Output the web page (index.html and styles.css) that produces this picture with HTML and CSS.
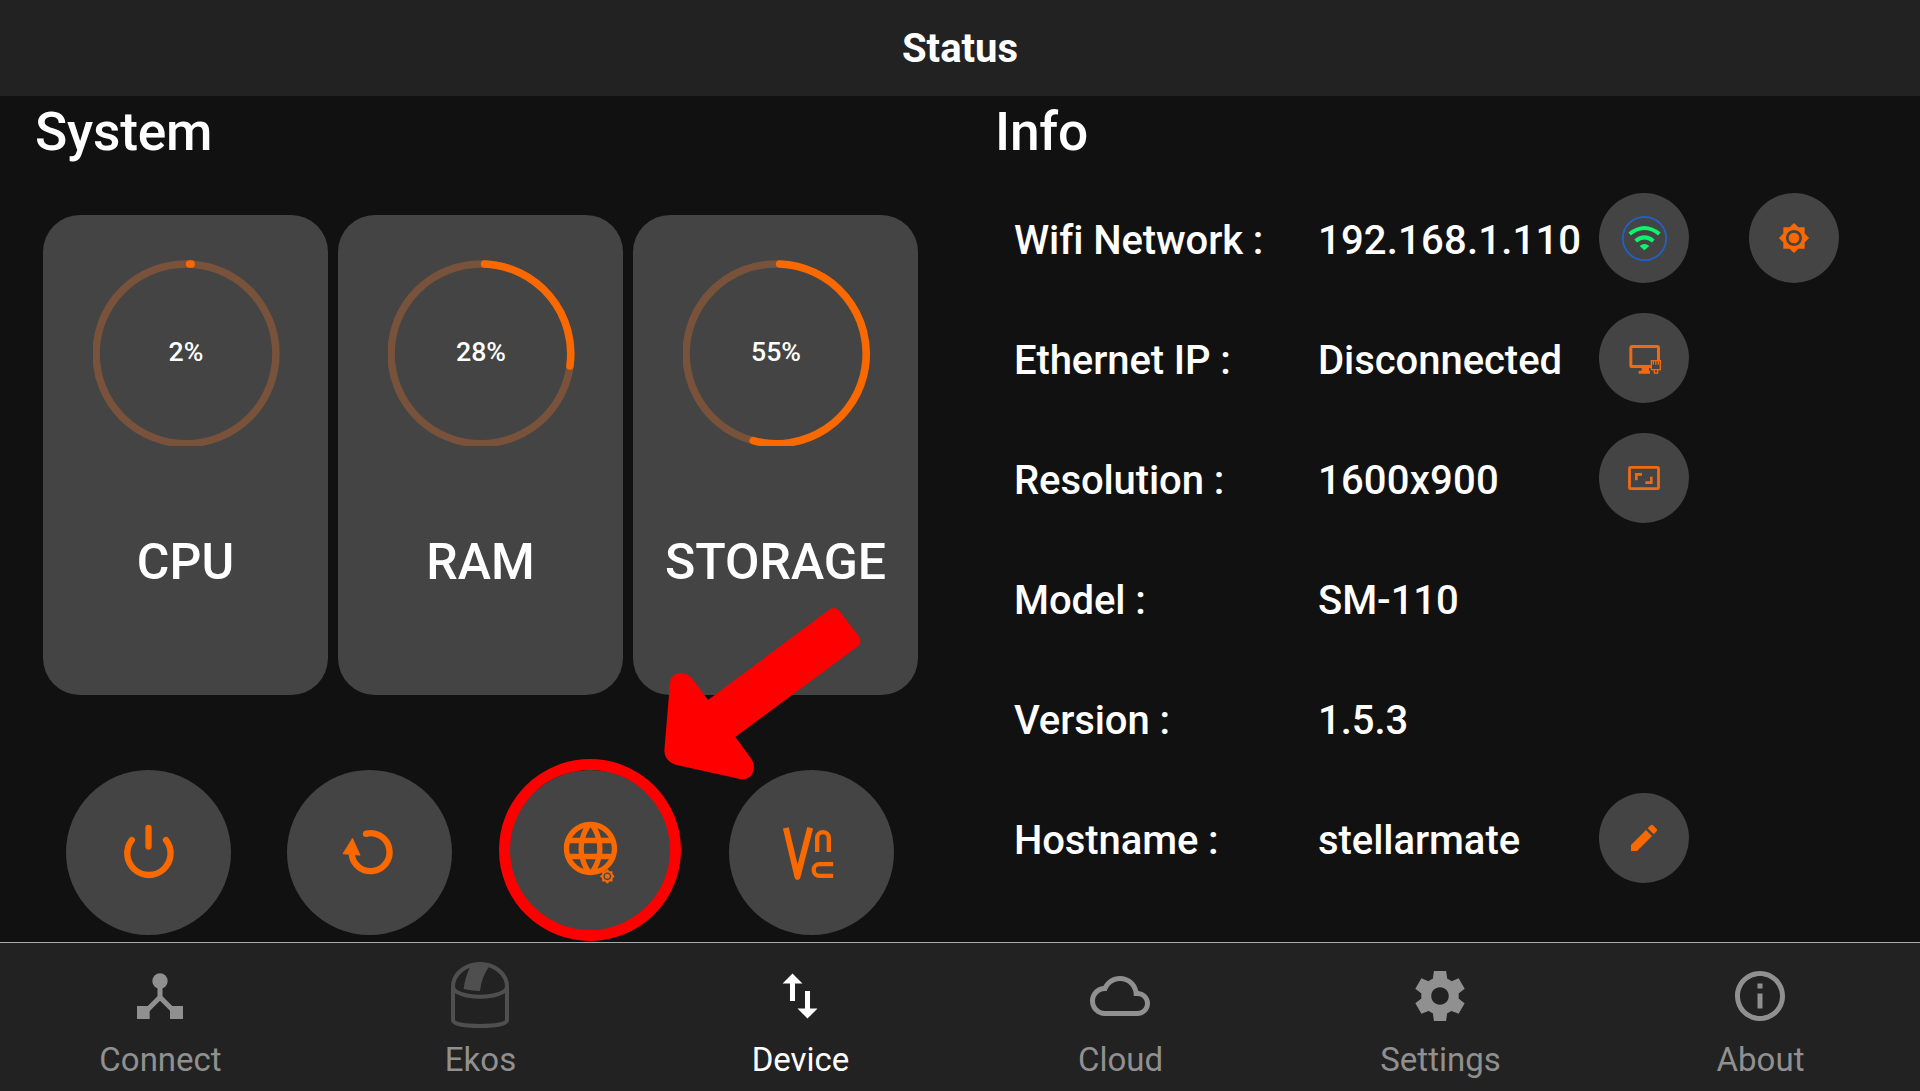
FILE: index.html
```html
<!DOCTYPE html>
<html lang="en">
<head>
<meta charset="utf-8">
<title>Status</title>
<link rel="stylesheet" href="styles.css">
</head>
<body>
<header class="topbar"><h1 class="topbar-title">Status</h1></header>

<main class="content">
  <section class="panel system">
    <h2 class="panel-title">System</h2>
    <div class="cards">
      <div class="card">
        <div class="gauge">
          <svg class="gauge-ring" viewBox="0 0 188 186"><circle class="track" cx="93" cy="93.8" r="89.9"/><path class="bar" d="M96.600 4A89.900 89.900 0 0 1 98.100 4.100"/></svg>
          <span class="gauge-value">2%</span>
        </div>
        <div class="card-label">CPU</div>
      </div>
      <div class="card">
        <div class="gauge">
          <svg class="gauge-ring" viewBox="0 0 188 186"><circle class="track" cx="93" cy="93.8" r="89.9"/><path class="bar" d="M96.600 4A89.900 89.900 0 0 1 181.900 106"/></svg>
          <span class="gauge-value">28%</span>
        </div>
        <div class="card-label">RAM</div>
      </div>
      <div class="card">
        <div class="gauge">
          <svg class="gauge-ring" viewBox="0 0 188 186"><circle class="track" cx="93" cy="93.8" r="89.9"/><path class="bar" d="M96.600 4A89.900 89.900 0 1 1 70.200 180.700"/></svg>
          <span class="gauge-value">55%</span>
        </div>
        <div class="card-label">STORAGE</div>
      </div>
    </div>
    <div class="actions">
      <div class="action">
        <svg class="icon" viewBox="-91.5 -91.5 183 183"><g class="line" stroke-width="19" stroke-linecap="round"><path d="M-50-37.5A65 65 0 1 0 52.500-37.500"/><path d="M0-74V-18"/></g></svg>
      </div>
      <div class="action">
        <svg class="icon" viewBox="-91.5 -91.5 183 183"><path class="line" stroke-width="19" d="M-10-56.500A57 57 0 1 1-53.500 5"/><circle cx="-10.500" cy="-56" r="9.500"/><path d="M-51-43L-28 8L-80 4Z" stroke="currentColor" stroke-width="2" stroke-linejoin="round"/></svg>
      </div>
      <div class="action action-marked">
        <svg class="icon" viewBox="-91.5 -91.5 183 183">
          <path transform="translate(0 -12) scale(8) translate(-12 -12)" d="M11.990 2C6.470 2 2 6.480 2 12s4.470 10 9.990 10C17.520 22 22 17.520 22 12S17.520 2 11.990 2zm6.930 6h-2.950c-.32-1.250-.78-2.450-1.380-3.560 1.840.63 3.370 1.910 4.330 3.560zM12 4.040c.83 1.200 1.480 2.530 1.910 3.960h-3.820c.43-1.430 1.080-2.760 1.910-3.960zM4.260 14C4.100 13.360 4 12.690 4 12s.1-1.360.26-2h3.380c-.08.66-.14 1.320-.14 2 0 .68.06 1.340.14 2H4.260zm.82 2h2.950c.32 1.250.78 2.450 1.380 3.560-1.840-.63-3.370-1.900-4.330-3.560zm2.950-8H5.080c.96-1.660 2.490-2.930 4.330-3.560C8.810 5.550 8.350 6.750 8.030 8zM12 19.960c-.83-1.200-1.480-2.530-1.910-3.960h3.820c-.43 1.430-1.080 2.760-1.910 3.960zM14.340 14H9.660c-.09-.66-.16-1.320-.16-2 0-.68.07-1.350.16-2h4.680c.09.65.16 1.320.16 2 0 .68-.07 1.340-.16 2zm.25 5.560c.6-1.110 1.060-2.310 1.380-3.560h2.950c-.96 1.650-2.490 2.930-4.330 3.560zM16.360 14c.08-.66.14-1.320.14-2 0-.68-.06-1.340-.14-2h3.380c.16.64.26 1.310.26 2s-.1 1.360-.26 2h-3.380z"/>
          <path class="soft" transform="translate(50.500 71.500) scale(1.950) translate(-12 -12)" fill-rule="evenodd" d="M20 15.310L23.310 12 20 8.690V4h-4.690L12 .69 8.690 4H4v4.690L.69 12 4 15.310V20h4.690L12 23.310 15.310 20H20v-4.690zM12 18c-3.310 0-6-2.690-6-6s2.690-6 6-6 6 2.690 6 6-2.690 6-6 6z"/>
          <circle class="soft" cx="50.500" cy="71.500" r="7.500"/>
        </svg>
      </div>
      <div class="action">
        <svg class="icon" viewBox="-91.5 -91.5 183 183"><g class="line"><path stroke-width="18" stroke-linejoin="round" d="M-77-74L-42 73L-4-74"/><path stroke-width="13" d="M17-1.500V-43.500A17.500 17.500 0 0 1 52-43.500V-1.500M65 35H24A17.500 17.500 0 0 0 24 70H65"/></g></svg>
      </div>
      <svg class="pointer" viewBox="552 54 588 513"><path d="M684 330L1050 58Q1065 49 1078 62L1137 140Q1147 155 1135 168L766 441L812 504Q824 520 821 540Q814 571 780 567L590 525Q554 514 553 482L570 278Q574 250 603 249Q625 250 638 268Z"/></svg>
    </div>
  </section>

  <section class="panel info">
    <h2 class="panel-title">Info</h2>
    <div class="rows">
      <div class="row">
        <span class="label">Wifi Network :</span><span class="value numeric">192.168.1.110</span>
        <div class="tool">
          <svg class="icon" viewBox="-90 -90 180 180"><circle class="wifi-ring" cx="1.500" cy="1.500" r="65"/><g class="wifi-waves"><path d="M-43-12Q1-48 46-12M-25 9Q1-13 28 9"/></g><path class="wifi-dot" d="M-13 24Q1 12 16 24L1 37Z"/></svg>
        </div>
        <div class="tool tool-far">
          <svg class="icon" viewBox="-90 -90 180 180"><path transform="scale(4) translate(-12 -12)" d="M20 15.310L23.310 12 20 8.690V4h-4.690L12 .69 8.690 4H4v4.690L.69 12 4 15.310V20h4.690L12 23.310 15.310 20H20v-4.690zM12 18c-3.310 0-6-2.690-6-6s2.690-6 6-6 6 2.690 6 6-2.690 6-6 6z"/><circle r="16"/></svg>
        </div>
      </div>
      <div class="row">
        <span class="label">Ethernet IP :</span><span class="value">Disconnected</span>
        <div class="tool">
          <svg class="icon soft" viewBox="-90 -90 180 180"><rect class="line" x="-39.500" y="-34.500" width="83" height="60" rx="4" stroke-width="9"/><path d="M-7 28H15V38H18V47H-16V38H-7Z"/><rect class="plug" x="22" y="8" width="27" height="27"/><path class="line" stroke-width="4" d="M28 8V20M35.500 8V20M43 8V20M31 35V45H41V35"/></svg>
        </div>
      </div>
      <div class="row">
        <span class="label">Resolution :</span><span class="value numeric">1600x900</span>
        <div class="tool">
          <svg class="icon soft" viewBox="-90 -90 180 180"><g class="line"><rect x="-43.500" y="-32" width="87" height="64" rx="3" stroke-width="8.500"/><path stroke-width="8" d="M-23 7V-11H-6M4 14H22V-4"/></g></svg>
        </div>
      </div>
      <div class="row"><span class="label">Model :</span><span class="value">SM-110</span></div>
      <div class="row"><span class="label">Version :</span><span class="value">1.5.3</span></div>
      <div class="row">
        <span class="label">Hostname :</span><span class="value">stellarmate</span>
        <div class="tool">
          <svg class="icon" viewBox="-90 -90 180 180"><path d="M-39 39V21L6-24L24-6L-21 39ZM11-29L20-38Q23-41 27-38L38-27Q41-24 38-20L29-11Z"/></svg>
        </div>
      </div>
    </div>
  </section>
</main>

<nav class="tabs">
  <div class="tab">
    <svg class="icon" viewBox="-90 -90 180 180"><circle cy="-45" r="23"/><path d="M-69 30H-31V69H-69ZM30 30H69V69H30Z"/><path class="line" stroke-width="15" d="M0-45V4M-42 45.500L0 3.500L42 45.500"/></svg>
    <span class="tab-label">Connect</span>
  </div>
  <div class="tab">
    <svg class="icon dome" viewBox="-90 -90 180 180"><path class="line" stroke-width="12" d="M-81-28V72C-81 84-45 90 0 90S81 84 81 72V-28A81 68 0 0 0-81-28C-78 12 78 12 81-28"/><path d="M-27-92Q-45-58-49-21Q-24-15 0-15Q4-55 28-90Z"/></svg>
    <span class="tab-label">Ekos</span>
  </div>
  <div class="tab tab-active">
    <svg class="icon" viewBox="0 0 24 24"><path d="M9 3L5 6.990h3V14h2V6.990h3L9 3zm7 14.010V10h-2v7.010h-3L15 21l4-3.990h-3z"/></svg>
    <span class="tab-label">Device</span>
  </div>
  <div class="tab">
    <svg class="icon" viewBox="0 0 24 24"><path d="M19.350 10.040C18.670 6.590 15.640 4 12 4 9.110 4 6.600 5.640 5.350 8.040 2.340 8.360 0 10.910 0 14c0 3.310 2.690 6 6 6h13c2.760 0 5-2.240 5-5 0-2.640-2.050-4.780-4.650-4.960zM19 18H6c-2.210 0-4-1.790-4-4s1.790-4 4-4h.71C7.370 7.690 9.480 6 12 6c3.040 0 5.500 2.460 5.500 5.500v.5H19c1.660 0 3 1.340 3 3s-1.340 3-3 3z"/></svg>
    <span class="tab-label">Cloud</span>
  </div>
  <div class="tab">
    <svg class="icon" viewBox="0 0 24 24"><path d="M19.440 12.990l-.01.02c.04-.33.08-.67.08-1.010 0-.34-.03-.66-.07-.99l.01.02 2.440-1.920-2.430-4.220-2.870 1.160.01.01c-.52-.4-1.090-.74-1.710-1h.01L14.440 2H9.570l-.44 3.070h.01c-.62.26-1.190.6-1.710 1l.01-.01-2.880-1.170-2.440 4.220 2.440 1.920.01-.02c-.04.33-.07.65-.07.99 0 .34.03.68.08 1.010l-.01-.02-2.100 1.650-.33.26 2.430 4.200 2.880-1.150-.02-.04c.53.41 1.100.75 1.730 1.010h-.03L9.580 22h4.850s.03-.18.06-.42l.38-2.650h-.01c.62-.26 1.200-.6 1.730-1.010l-.02.04 2.880 1.150 2.430-4.200s-.14-.12-.33-.26l-2.110-1.660zM12 15.500c-1.930 0-3.500-1.570-3.500-3.500s1.570-3.500 3.500-3.500 3.500 1.570 3.500 3.500-1.570 3.500-3.500 3.500z"/></svg>
    <span class="tab-label">Settings</span>
  </div>
  <div class="tab">
    <svg class="icon" viewBox="0 0 24 24"><path d="M11 7h2v2h-2zm0 4h2v6h-2zm1-9C6.480 2 2 6.480 2 12s4.480 10 10 10 10-4.480 10-10S17.520 2 12 2zm0 18c-4.410 0-8-3.590-8-8s3.590-8 8-8 8 3.590 8 8-3.590 8-8 8z"/></svg>
    <span class="tab-label">About</span>
  </div>
</nav>
</body>
</html>
```
FILE: styles.css
```css
*,
*::after { box-sizing: border-box; }

body {
  margin: 0;
  height: 1091px;
  display: flex;
  flex-direction: column;
  overflow: hidden;
  background: #111;
  color: #fff;
  font-family: Roboto, "Liberation Sans", sans-serif;
  font-weight: 500;
}

.topbar {
  height: 96px;
  flex: none;
  display: flex;
  align-items: center;
  justify-content: center;
  padding-top: 2px;
  background: #222;
}

.topbar-title {
  margin: 0;
  font-size: 40px;
  font-weight: 700;
  line-height: 48px;
}

.content {
  height: 846px;
  flex: none;
  display: grid;
  grid-template-columns: 960px 960px;
}

.panel-title {
  margin: 0;
  padding: 2px 0 0 35px;
  font-size: 53.300px;
  font-weight: 500;
  line-height: 69px;
  letter-spacing: -0.2px;
}

.cards {
  display: flex;
  gap: 10px;
  margin: 48px 0 0 43px;
}

.card {
  width: 285px;
  height: 480px;
  padding-top: 45px;
  border-radius: 37px;
  background: #444;
}

.gauge {
  width: 188px;
  height: 186px;
  margin-left: 50px;
  display: grid;
  place-items: center;
}

.gauge-ring,
.gauge-value { grid-area: 1 / 1; }

.gauge-ring {
  width: 188px;
  height: 186px;
  fill: none;
  stroke-width: 7.5;
}

.track { stroke: #78523b; }

.bar {
  stroke: #fa6800;
  stroke-linecap: round;
}

.gauge-value {
  padding: 0 2px 2px 0;
  font-size: 26.700px;
  line-height: 30px;
}

.card-label {
  margin-top: 86px;
  font-size: 50px;
  line-height: 60px;
  text-align: center;
}

.actions {
  position: relative;
  display: flex;
  gap: 56px;
  margin: 75px 0 0 66px;
}

.action,
.tool {
  display: flex;
  flex: none;
  align-items: center;
  justify-content: center;
  border-radius: 50%;
  background: #444;
  color: #fa6800;
}

.action {
  width: 165px;
  height: 165px;
}

.action-marked { position: relative; }

.action-marked::after {
  content: "";
  position: absolute;
  left: -9px;
  top: -11px;
  width: 182px;
  height: 182px;
  border: 11.500px solid #f00;
  border-radius: 50%;
}

.pointer {
  position: absolute;
  left: 598px;
  top: -162px;
  width: 196px;
  height: 171px;
  overflow: visible;
  fill: #f00;
}

.icon {
  display: block;
  width: 60px;
  height: 60px;
  overflow: visible;
  fill: currentColor;
}

.action .icon {
  width: 61px;
  height: 61px;
}

.line {
  fill: none;
  stroke: currentColor;
}

.soft { color: #ee6b14; fill: currentColor; }

.plug {
  fill: #444;
  stroke: currentColor;
  stroke-width: 4;
}

.wifi-ring {
  fill: none;
  stroke: #1e62cf;
  stroke-width: 5;
}

.wifi-waves {
  fill: none;
  stroke: #0df56b;
  stroke-width: 12;
}

.wifi-dot { fill: #0df56b; }

.rows {
  display: grid;
  grid-auto-rows: 120px;
  margin: 11px 0 0 54px;
}

.row {
  display: flex;
  align-items: center;
  font-size: 40px;
  line-height: 48px;
}

.label,
.value {
  flex: none;
  padding-top: 6px;
  white-space: nowrap;
}

.label {
  width: 304px;
  letter-spacing: -0.1px;
}

.value {
  width: 281px;
  letter-spacing: -0.05px;
}

.numeric { letter-spacing: 0.2px; }

.tool {
  width: 90px;
  height: 90px;
}

.tool-far { margin-left: 60px; }

.tabs {
  height: 149px;
  flex: none;
  display: grid;
  grid-template-columns: repeat(6, 1fr);
  border-top: 1px solid #a9a9a9;
  background: #222;
  color: #909090;
}

.tab {
  display: flex;
  flex-direction: column;
  align-items: center;
  gap: 14px;
  padding-top: 23px;
}

.tab-active { color: #fff; }

.tab-label {
  padding-left: 1px;
  font-size: 33px;
  font-weight: 400;
  line-height: 40px;
}

.dome { color: #4f4f4f; }
```
